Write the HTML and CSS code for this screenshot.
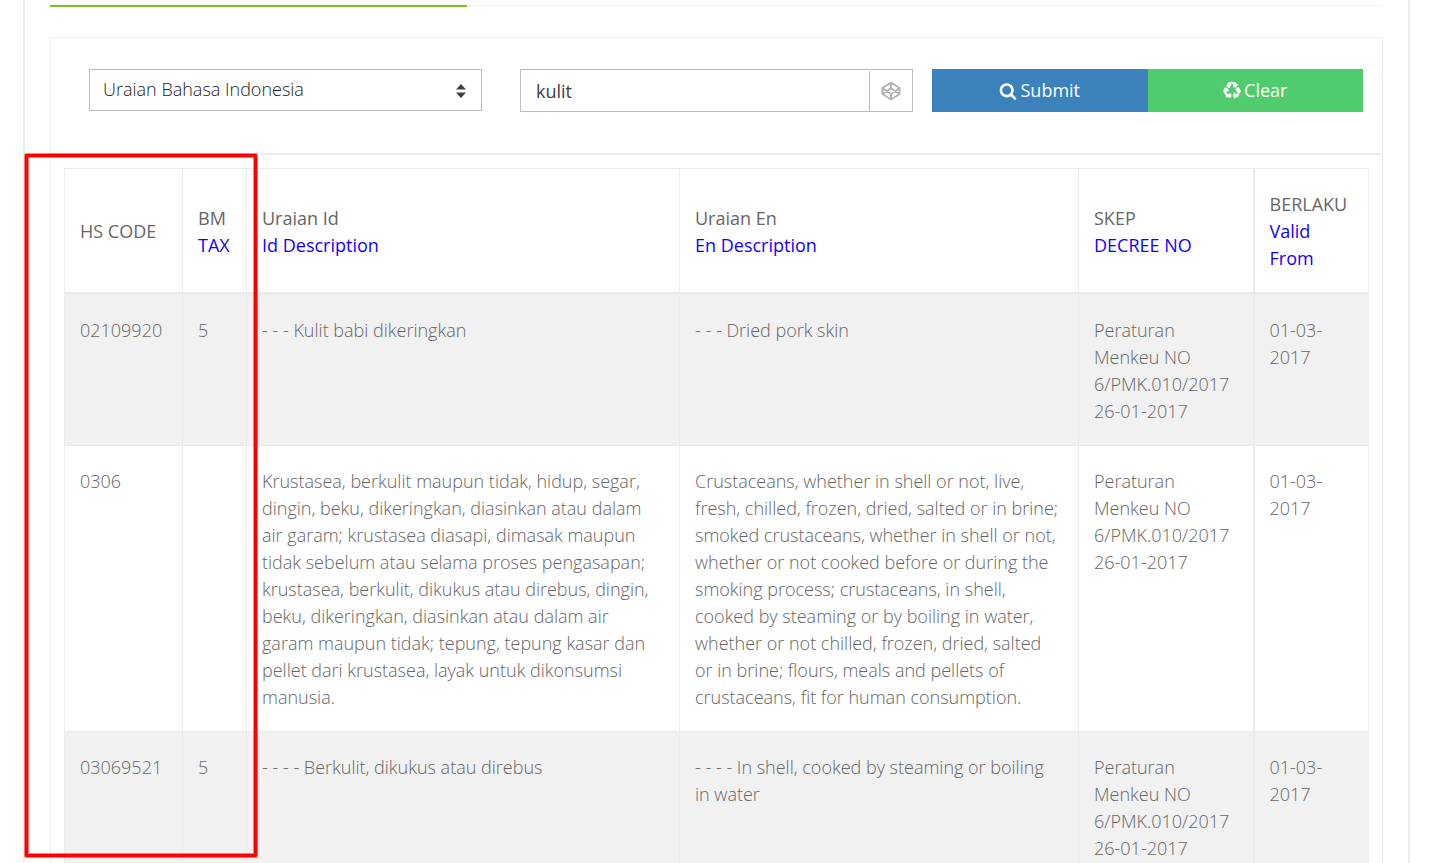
FILE: index.html
```html
<!DOCTYPE html>
<html lang="id">
<head>
<meta charset="utf-8">
<title>HS Code</title>
<link rel="stylesheet" href="styles.css">
</head>
<body>
<main class="frame">
  <div class="tab-line"><div class="tab-active"></div></div>
  <section class="panel">
    <form class="search">
      <div class="select-wrap">
        <select class="control" aria-label="Search field"><option>Uraian Bahasa Indonesia</option></select>
        <svg class="caret" viewBox="0 0 10 14" aria-hidden="true"><path d="M0 5.500 5 0l5 5.500zM0 8.500h10L5 14z"/></svg>
      </div>
      <div class="keyword">
        <input class="keyword-input" type="text" value="kulit" aria-label="Keyword">
        <span class="addon"><svg class="pen" viewBox="0 0 20 20" aria-hidden="true"><path d="M10 1.500 18.500 7v6L10 18.500 1.500 13V7zM10 1.500V7M10 13v5.500M1.500 7 10 13l8.500-6M1.500 13 10 7l8.500 6"/></svg></span>
      </div>
      <div class="actions">
        <button class="btn btn-submit" type="button"><svg class="icon" viewBox="0 0 1792 1792" aria-hidden="true"><path d="M1216 832q0-185-131.500-316.500t-316.500-131.500-316.500 131.500-131.500 316.500 131.500 316.500 316.500 131.500 316.500-131.500 131.500-316.500zm512 832q0 52-38 90t-90 38q-54 0-90-38l-343-342q-179 124-399 124-143 0-273.500-55.500t-225-150-150-225-55.500-273.500 55.500-273.500 150-225 225-150 273.500-55.500 273.500 55.500 225 150 150 225 55.500 273.500q0 220-124 399l343 343q37 37 37 90z"/></svg>Submit</button>
        <button class="btn btn-clear" type="button"><svg class="icon" viewBox="0 0 1792 1792" aria-hidden="true"><path d="M836 1169l-15 368-2 22-420-29q-36-3-67-31.500t-47-65.500q-11-27-14.500-55t4-65 12-55 21.500-64 19-53q78 12 509 28zm-387-586l180 379-147-92q-63 72-111.500 144.500t-72.500 125-39.500 94.500-18.500 63l-4 21-190-357q-17-26-18-56t6-47l8-18q35-63 114-188l-140-86zm1231 517l-188 359q-12 29-36.500 46.500t-43.500 20.500l-18 4q-71 7-219 12l8 164-230-367 211-362 7 173q170 16 283 5t170-33zm-785-924q-47 63-265 435l-317-187-19-12 225-356q20-31 60-45t80-10q24 2 48.500 12t42 21 41.500 33 36 34.500 36 39.500 32 35zm655 307l212 363q18 37 12.500 76t-27.500 74q-13 20-33 37t-38 28-48.500 22-47 16-51.500 14-46 12q-34-72-265-436l313-195zm-143-226l142-83-220 373-419-20 151-86q-34-89-75-166t-75.500-123.500-64.500-80-47-46.500l-17-13 405 1q31-3 58 10.500t39 28.500l11 15q39 56 112 187z"/></svg>Clear</button>
      </div>
    </form>
    <div class="results">
      <table class="grid">
        <colgroup><col class="c-code"><col class="c-tax"><col class="c-id"><col class="c-en"><col class="c-skep"><col class="c-valid"></colgroup>
        <thead>
          <tr>
            <th>HS CODE</th>
            <th>BM<br><span class="en">TAX</span></th>
            <th>Uraian Id<br><span class="en">Id Description</span></th>
            <th>Uraian En<br><span class="en">En Description</span></th>
            <th>SKEP<br><span class="en">DECREE NO</span></th>
            <th>BERLAKU<br><span class="en">Valid From</span></th>
          </tr>
        </thead>
        <tbody>
          <tr>
            <td>02109920</td><td>5</td><td>- - - Kulit babi dikeringkan</td><td>- - - Dried pork skin</td>
            <td>Peraturan Menkeu NO 6/PMK.010/2017 26-01-2017</td><td>01-03-2017</td>
          </tr>
          <tr>
            <td>0306</td><td></td>
            <td>Krustasea, berkulit maupun tidak, hidup, segar, dingin, beku, dikeringkan, diasinkan atau dalam air garam; krustasea diasapi, dimasak maupun tidak sebelum atau selama proses pengasapan; krustasea, berkulit, dikukus atau direbus, dingin, beku, dikeringkan, diasinkan atau dalam air garam maupun tidak; tepung, tepung kasar dan pellet dari krustasea, layak untuk dikonsumsi manusia.</td>
            <td>Crustaceans, whether in shell or not, live, fresh, chilled, frozen, dried, salted or in brine; smoked crustaceans, whether in shell or not, whether or not cooked before or during the smoking process; crustaceans, in shell, cooked by steaming or by boiling in water, whether or not chilled, frozen, dried, salted or in brine; flours, meals and pellets of crustaceans, fit for human consumption.</td>
            <td>Peraturan Menkeu NO 6/PMK.010/2017 26-01-2017</td><td>01-03-2017</td>
          </tr>
          <tr>
            <td>03069521</td><td>5</td><td>- - - - Berkulit, dikukus atau direbus</td><td>- - - - In shell, cooked by steaming or boiling in water</td>
            <td>Peraturan Menkeu NO 6/PMK.010/2017 26-01-2017</td><td>01-03-2017</td>
          </tr>
        </tbody>
      </table>
    </div>
  </section>
</main>
<div class="highlight"></div>
</body>
</html>
```
FILE: styles.css
```css
* { box-sizing: border-box; }
body {
  margin: 0;
  background: #fff;
  color: #666;
  font: 300 18px/27px "Open Sans", sans-serif;
}
.frame {
  margin: 0 40px 0 23px;
  padding: 5px 25px 0;
  border: solid #eee;
  border-width: 0 2px;
}
.tab-line { height: 2px; background: linear-gradient(#f3f3f3 1px, transparent 1px); }
.tab-active { width: 31.25%; height: 2px; background: #7bc11a; }
.panel { margin-top: 30px; border: 1px solid #eee; }
.search {
  display: grid;
  grid-template-columns: 412fr 393fr 431fr;
  column-gap: 19px;
  align-items: start;
  padding: 31px 19px 41px 38px;
  border-bottom: 2px solid #eee;
}
.select-wrap { position: relative; margin-right: 19px; }
.control {
  display: block;
  width: 100%;
  height: 42px;
  padding: 0 13px 2px;
  border: 1px solid #bbb;
  border-radius: 0;
  background: #fff;
  color: #222;
  font: 300 18px/27px "Open Sans", sans-serif;
  appearance: none;
}
.caret { position: absolute; top: 15px; right: 16px; width: 10px; height: 14px; fill: #404040; }
.keyword { display: flex; height: 43px; border: 1px solid #bbb; }
.keyword-input {
  flex: 1;
  min-width: 0;
  padding: 2px 15px 0;
  border: 0;
  background: transparent;
  color: #404040;
  font: 400 18px/27px "Open Sans", sans-serif;
}
.addon { display: flex; align-items: center; justify-content: center; width: 43px; margin-top: 1px; border-left: 1px solid #bbb; }
.pen { width: 20px; height: 20px; fill: none; stroke: #b5b5b0; stroke-width: 2; stroke-linejoin: round; }
.actions { display: flex; }
.btn {
  display: flex;
  flex: 1;
  align-items: center;
  justify-content: center;
  gap: 3px;
  height: 43px;
  padding: 0;
  border: 0;
  color: #fff;
  font: 400 18px/27px "Open Sans", sans-serif;
}
.btn-submit { background: #3b81bc; }
.btn-clear { background: #4fcc6e; }
.icon { width: 18px; height: 18px; fill: #fff; }
.results { padding: 13px 14px 14px 13px; }
.grid { width: 100%; border-collapse: collapse; table-layout: fixed; }
.c-code { width: 118px; }
.c-tax { width: 64px; }
.c-id { width: 433px; }
.c-en { width: 399px; }
.c-skep { width: 175px; }
.c-valid { width: 115px; }
.grid th, .grid td { padding: 22px 15px 20px; border: 1px solid #e9ecef; text-align: left; vertical-align: top; }
.grid th { vertical-align: middle; border-bottom-width: 3px; font-weight: 400; }
.grid th:last-child, .grid td:last-child { border-left-width: 2px; }
.grid tbody tr:nth-child(odd) { background: #f1f1f1; }
.en { color: #1400ff; }
.highlight {
  position: absolute;
  top: 154px;
  left: 25px;
  width: 232px;
  height: 703px;
  border: 3px solid #f00;
  border-radius: 1px;
  box-shadow: 0 0 0 1px rgba(255, 0, 0, .5), inset 0 0 0 1px rgba(255, 0, 0, .5);
  pointer-events: none;
}
```
